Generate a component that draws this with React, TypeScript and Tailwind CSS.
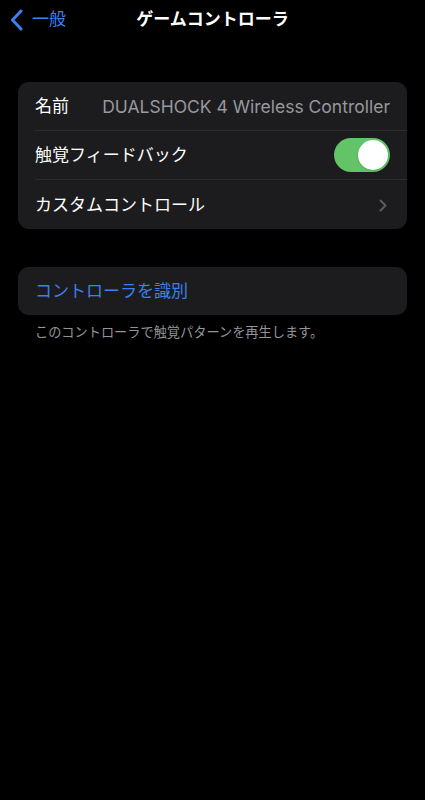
import React from "react";

const font = { fontFamily: '"Inter", "Noto Sans CJK JP", sans-serif' };

function Row({ children, last }: { children: React.ReactNode; last?: boolean }) {
  return (
    <div className="pl-[17px]">
      <div
        className={`flex h-[49px] items-center pr-[17px] pt-[2px] ${last ? "" : "border-b border-[#2c2c2e]"}`}
      >
        {children}
      </div>
    </div>
  );
}

export default function App() {
  return (
    <div className="min-h-[800px] w-full bg-black text-white" style={font}>
      <div className="grid h-[40px] grid-cols-[1fr_auto_1fr] items-center">
        <div className="flex items-center gap-[9px] pl-[10px]">
          <svg width="13" height="22" viewBox="0 0 13 22" fill="none">
            <path d="M11 2 L2.5 11 L11 20" stroke="#3a80f0" strokeWidth="3" strokeLinecap="round" strokeLinejoin="round" />
          </svg>
          <span className="text-[17px] text-[#3a80f0]">一般</span>
        </div>
        <div className="text-[17px] font-semibold">ゲームコントローラ</div>
        <div />
      </div>

      <div className="mx-[18px] mt-[42px] overflow-hidden rounded-[11px] bg-[#1c1c1e]">
        <Row>
          <span className="text-[17px]">名前</span>
          <span className="ml-auto text-[17.5px] text-[#98989e]">DUALSHOCK 4 Wireless Controller</span>
        </Row>
        <Row>
          <span className="text-[17px]">触覚フィードバック</span>
          <div className="ml-auto -mt-[2px] flex h-[34px] w-[56px] items-center justify-end rounded-full bg-[#62c466] p-[2px]">
            <div className="h-[30px] w-[30px] rounded-full bg-white shadow" />
          </div>
        </Row>
        <Row last>
          <span className="text-[17px]">カスタムコントロール</span>
          <svg className="ml-auto mr-[3px]" width="8" height="13" viewBox="0 0 8 13" fill="none">
            <path d="M1.5 1.5 L6.5 6.5 L1.5 11.5" stroke="#5b5b60" strokeWidth="2" strokeLinecap="round" strokeLinejoin="round" />
          </svg>
        </Row>
      </div>

      <div className="mx-[18px] mt-[38px] flex h-[48px] items-center rounded-[11px] bg-[#1c1c1e] pl-[17px] pt-[2px]">
        <span className="text-[17px] text-[#3a80f0]">コントローラを識別</span>
      </div>

      <div className="mt-[8px] pl-[35px] text-[13.2px] text-[#939398]">
        このコントローラで触覚パターンを再生します。
      </div>
    </div>
  );
}
